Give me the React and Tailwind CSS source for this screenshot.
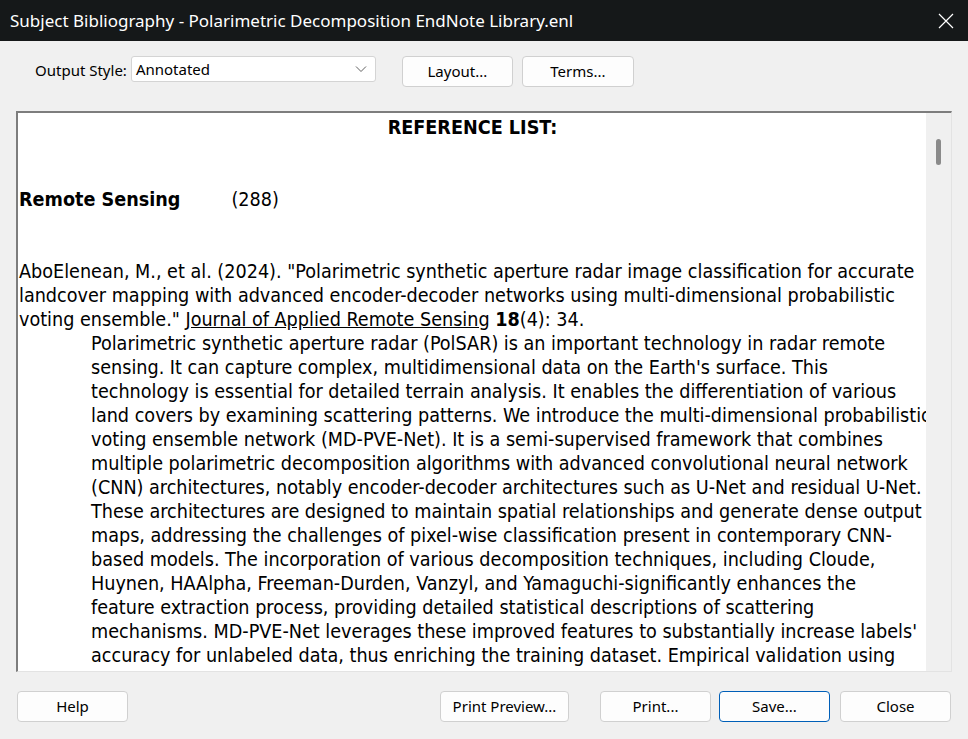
import React from "react";

const citeLines = [
  "AboElenean, M., et al. (2024). \"Polarimetric synthetic aperture radar image classification for accurate",
  "landcover mapping with advanced encoder-decoder networks using multi-dimensional probabilistic",
];

const abstractLines = [
  "Polarimetric synthetic aperture radar (PolSAR) is an important technology in radar remote",
  "sensing. It can capture complex, multidimensional data on the Earth's surface. This",
  "technology is essential for detailed terrain analysis. It enables the differentiation of various",
  "land covers by examining scattering patterns. We introduce the multi-dimensional probabilistic",
  "voting ensemble network (MD-PVE-Net). It is a semi-supervised framework that combines",
  "multiple polarimetric decomposition algorithms with advanced convolutional neural network",
  "(CNN) architectures, notably encoder-decoder architectures such as U-Net and residual U-Net.",
  "These architectures are designed to maintain spatial relationships and generate dense output",
  "maps, addressing the challenges of pixel-wise classification present in contemporary CNN-",
  "based models. The incorporation of various decomposition techniques, including Cloude,",
  "Huynen, HAAlpha, Freeman-Durden, Vanzyl, and Yamaguchi-significantly enhances the",
  "feature extraction process, providing detailed statistical descriptions of scattering",
  "mechanisms. MD-PVE-Net leverages these improved features to substantially increase labels'",
  "accuracy for unlabeled data, thus enriching the training dataset. Empirical validation using",
];

const uiFont = { fontFamily: '"Noto Sans", "Open Sans", sans-serif' };
const docFont = { fontFamily: '"DejaVu Sans Condensed", "DejaVu Sans", sans-serif' };

const Btn = ({ children, className = "", primary }) => (
  <button
    className={`h-[31px] bg-[#fdfdfd] rounded-[4px] text-[15px] text-black ${
      primary ? "border border-[#005fb8]" : "border border-[#d0d0d0]"
    } ${className}`}
    style={uiFont}
  >
    {children}
  </button>
);

const App = () => {
  return (
    <div className="w-[968px] h-[739px] bg-[#f0f0f0] flex flex-col overflow-hidden" style={uiFont}>
      {/* title bar */}
      <div className="h-[41px] bg-[#151819] flex items-center justify-between pl-[10px] pr-[14px]">
        <span className="text-white text-[17px] leading-none">
          Subject Bibliography - Polarimetric Decomposition EndNote Library.enl
        </span>
        <svg width="16" height="16" viewBox="0 0 16 16" className="mt-[1px]">
          <path d="M1 1 L15 15 M15 1 L1 15" stroke="white" strokeWidth="1.2" />
        </svg>
      </div>

      {/* toolbar */}
      <div className="flex items-center h-[60px] pl-[35px]">
        <span className="text-[15px] text-black mr-[4px] mt-[-2px]">Output Style:</span>
        <div className="w-[245px] h-[26px] bg-white border border-[#d4d4d4] rounded-[3px] flex items-center justify-between pl-[4px] pr-[8px] mt-[-4px]">
          <span className="text-[15px] text-black leading-none">Annotated</span>
          <svg width="12" height="8" viewBox="0 0 12 8">
            <path d="M1 1.5 L6 6.5 L11 1.5" stroke="#606060" strokeWidth="1" fill="none" />
          </svg>
        </div>
        <Btn className="w-[111px] ml-[26px]">Layout...</Btn>
        <Btn className="w-[112px] ml-[9px]">Terms...</Btn>
      </div>

      {/* reference list pane */}
      <div className="ml-[16px] mt-[10px] w-[936px] h-[561px] border-t-2 border-l-2 border-[#7d7d7d] border-r border-b border-r-[#e3e3e3] border-b-[#e3e3e3] flex">
        <div className="flex-1 bg-white overflow-hidden text-[19.6px] leading-[24px] text-black pl-[1px]" style={docFont}>
          <div className="text-center font-bold pt-[3px]">REFERENCE LIST:</div>
          <div className="h-[48px]" />
          <div className="whitespace-pre">
            <span className="font-bold">Remote Sensing</span>
            <span className="inline-block w-[51px]" />
            <span>(288)</span>
          </div>
          <div className="h-[48px]" />
          {citeLines.map((l) => (
            <div key={l} className="whitespace-nowrap">{l}</div>
          ))}
          <div className="whitespace-nowrap">
            voting ensemble." <span className="underline">Journal of Applied Remote Sensing</span>{" "}
            <span className="font-bold">18</span>(4): 34.
          </div>
          {abstractLines.map((l) => (
            <div key={l} className="whitespace-nowrap pl-[72px]">{l}</div>
          ))}
        </div>
        <div className="w-[25px] bg-[#f0f0f0] flex justify-center pt-[26px]">
          <div className="w-[5px] h-[26px] rounded-full bg-[#8a8a8a] ml-[-1px]" />
        </div>
      </div>

      {/* bottom buttons */}
      <div className="flex items-center mt-[19px] px-[17px]">
        <Btn className="w-[111px]">Help</Btn>
        <div className="flex-1" />
        <Btn className="w-[129px]">Print Preview...</Btn>
        <Btn className="w-[111px] ml-[31px]">Print...</Btn>
        <Btn className="w-[111px] ml-[8px]" primary>Save...</Btn>
        <Btn className="w-[111px] ml-[10px]">Close</Btn>
      </div>
    </div>
  );
};

export default App;
